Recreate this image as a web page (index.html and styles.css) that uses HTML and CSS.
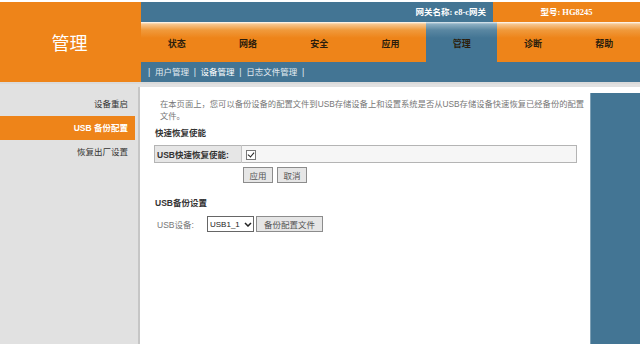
FILE: index.html
```html
<!DOCTYPE html>
<html lang="zh-CN">
<head>
  <meta charset="UTF-8" />
  <title>管理 - 设备管理</title>
  <link rel="stylesheet" href="styles.css">
</head>
<body>

  <div class="top">
    <div class="logo">管理</div>
    <div class="head">
      <div class="infobar">
        <div class="gw">网关名称: e8-c网关</div>
        <div class="model">型号: HG8245</div>
      </div>
      <ul class="nav">
        <li>状态</li>
        <li>网络</li>
        <li>安全</li>
        <li>应用</li>
        <li class="active">管理</li>
        <li>诊断</li>
        <li>帮助</li>
      </ul>
      <div class="subnav">| &nbsp;用户管理 &nbsp;| &nbsp;<span class="cur">设备管理</span> &nbsp;| &nbsp;日志文件管理 &nbsp;|</div>
    </div>
  </div>

  <div class="main">
    <ul class="side">
      <li>设备重启</li>
      <li class="active">USB 备份配置</li>
      <li>恢复出厂设置</li>
    </ul>

    <div class="panel">
      <div class="content">
        <p class="intro">在本页面上，您可以备份设备的配置文件到USB存储设备上和设置系统是否从USB存储设备快速恢复已经备份的配置文件。</p>

        <h3>快速恢复使能</h3>
        <table class="form">
          <tr>
            <td class="label">USB快速恢复使能:</td>
            <td class="value"><input type="checkbox" class="check" checked></td>
          </tr>
        </table>
        <div class="actions">
          <button>应用</button>
          <button>取消</button>
        </div>

        <h3 class="second">USB备份设置</h3>
        <div class="usb-row">
          <span class="usb-label">USB设备:</span>
          <span class="select-wrap">
            <select><option>USB1_1</option></select>
            <svg class="chev" width="8" height="5" viewBox="0 0 8 5"><path d="M1 1 L4 4 L7 1" fill="none" stroke="#222" stroke-width="1.5"/></svg>
          </span>
          <button>备份配置文件</button>
        </div>
      </div>
      <div class="aside"></div>
    </div>
  </div>

</body>
</html>
```

FILE: styles.css
```css
html, body { height: 100%; }
body {
  margin: 0;
  padding-top: 2px;
  box-sizing: border-box;
  background: #fff;
  font-family: "Liberation Sans", "Noto Sans CJK SC", sans-serif;
  font-size: 8.5px;
  display: flex;
  flex-direction: column;
}
ul { list-style: none; margin: 0; padding: 0; }

.top { display: grid; grid-template-columns: 141px 1fr; }
.logo {
  background: #ee8419;
  color: #fff;
  font-family: "Liberation Serif", "Noto Sans CJK SC", serif;
  font-size: 18px;
  display: flex;
  align-items: center;
  justify-content: center;
  height: 80px;
  padding-right: 2px;
}

.infobar { display: grid; grid-template-columns: 352px 1fr; height: 20px; }
.gw, .model {
  font-family: "Liberation Serif", "Noto Sans CJK SC", serif;
  font-weight: bold;
  font-size: 8.5px;
  color: #fff;
  line-height: 20px;
}
.gw { background: #437594; text-align: right; padding-right: 7px; }
.model { background: #ee8419; text-align: center; }

.nav { display: grid; grid-template-columns: repeat(7, 1fr); height: 40px; }
.nav li {
  background: linear-gradient(#fff 0, #f7c892 2px, #f09a3c 8px, #ee8419 16px);
  color: #2b1d0c;
  font-family: "Liberation Serif", "Noto Sans CJK SC", serif;
  font-weight: bold;
  font-size: 9px;
  display: flex;
  align-items: center;
  justify-content: center;
  padding-top: 3px;
  box-sizing: border-box;
}
.nav li.active { background: linear-gradient(#e6eef3 0, #8eb0c4 2px, #5a87a2 8px, #437594 16px); }

.subnav {
  background: #437594;
  height: 20px;
  line-height: 20px;
  color: #e4ecf1;
  padding-left: 7px;
}
.subnav .cur { color: #fff; }

.main {
  flex: 1;
  display: grid;
  grid-template-columns: 138px 1fr;
  background: #e1e1e1;
  border-top: 2px solid #dadada;
}

.side { padding-top: 8px; }
.side li {
  height: 24px;
  line-height: 24px;
  margin-right: 3px;
  padding-right: 7px;
  text-align: right;
  color: #333;
}
.side li.active { background: #ee8419; color: #fff; font-weight: bold; }

.panel {
  margin-top: 3px;
  background: #fff;
  border-left: 2px solid #c6c6c6;
  display: grid;
  grid-template-columns: 1fr 50px;
}
.aside { background: #437594; margin-top: 6px; border-left: 1px solid #7d9fb4; }

.content { padding: 11px 13px 0 14px; }
.intro {
  margin: 0 -10px 0 0;
  padding-left: 6px;
  font-size: 8.3px;
  line-height: 12px;
  color: #777;
}
h3 {
  margin: 5px 0 0 1px;
  font-size: 8.5px;
  line-height: 12px;
  color: #333;
}
h3.second { margin-top: 14px; }

.form {
  width: 100%;
  margin-top: 6px;
  border-collapse: collapse;
  border: 1px solid #b4b4b4;
}
.form td { height: 16px; padding: 0 0 0 2px; }
.form .label {
  width: 84px;
  background: #e6e6e6;
  border-right: 1px solid #c4c4c4;
  font-weight: bold;
  color: #333;
}
.form .value { background: #f6f6f6; padding-left: 4px; }

.check {
  appearance: none;
  width: 10px;
  height: 10px;
  margin: 3px 0 0;
  border: 1px solid #777;
  background: #fff;
  position: relative;
  box-sizing: border-box;
}
.check:checked::after {
  content: "";
  position: absolute;
  left: 2px;
  top: 0;
  width: 3px;
  height: 5px;
  border: solid #222;
  border-width: 0 1.5px 1.5px 0;
  transform: rotate(40deg);
}

button {
  height: 16px;
  padding: 0 6px;
  background: #e6e6e6;
  border: 1px solid #8c8c8c;
  border-radius: 0;
  font-family: inherit;
  font-size: 8.5px;
  color: #555;
}
.actions { margin-top: 4px; padding-left: 89px; display: flex; gap: 4px; }
.actions button { width: 30px; padding: 0; }

.usb-row { display: flex; align-items: center; margin-top: 7px; padding-left: 3px; }
.usb-label { color: #777; width: 50px; }
.select-wrap { position: relative; display: inline-block; margin-right: 2px; height: 16px; }
select {
  appearance: none;
  width: 47px;
  height: 16px;
  font-family: inherit;
  font-size: 8px;
  color: #222;
  background: #fff;
  border: 1px solid #666;
  border-radius: 0;
  padding: 0 0 0 2px;
  display: block;
}
.chev { position: absolute; right: 2px; top: 6px; pointer-events: none; }
.usb-row button { width: 67px; }
```
